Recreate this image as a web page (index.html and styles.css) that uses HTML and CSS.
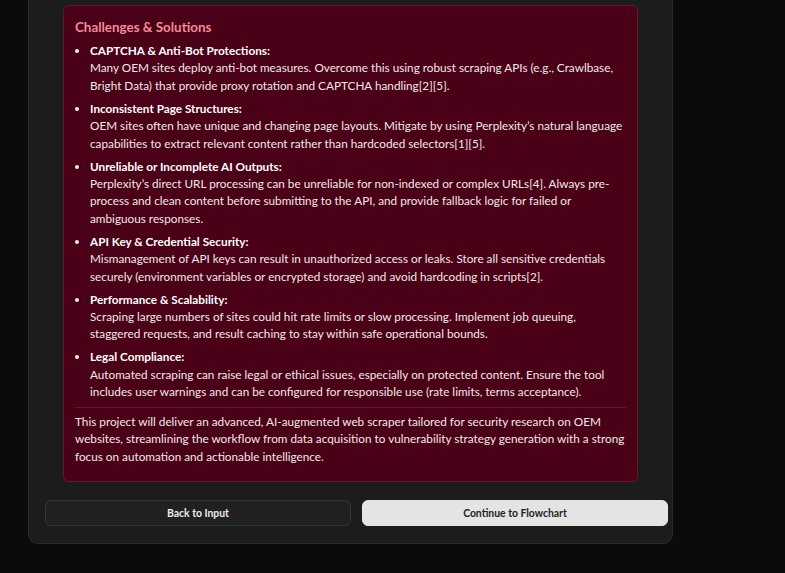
FILE: index.html
```html
<!DOCTYPE html>
<html lang="en">
<head>
<meta charset="utf-8">
<title>Challenges &amp; Solutions</title>
<link rel="stylesheet" href="styles.css">
</head>
<body>
<div class="page">
  <div class="card">
    <section class="challenges">
      <h3 class="challenges-title">Challenges &amp; Solutions</h3>
      <ul class="challenge-list">
        <li>
          <strong>CAPTCHA &amp; Anti-Bot Protections:</strong><br>
          Many OEM sites deploy anti-bot measures. Overcome this using robust scraping APIs (e.g., Crawlbase, Bright Data) that provide proxy rotation and CAPTCHA handling[2][5].
        </li>
        <li>
          <strong>Inconsistent Page Structures:</strong><br>
          OEM sites often have unique and changing page layouts. Mitigate by using Perplexity’s natural language capabilities to extract relevant content rather than hardcoded selectors[1][5].
        </li>
        <li>
          <strong>Unreliable or Incomplete AI Outputs:</strong><br>
          Perplexity’s direct URL processing can be unreliable for non-indexed or complex URLs[4]. Always pre-process and clean content before submitting to the API, and provide fallback logic for failed or ambiguous responses.
        </li>
        <li>
          <strong>API Key &amp; Credential Security:</strong><br>
          Mismanagement of API keys can result in unauthorized access or leaks. Store all sensitive credentials securely (environment variables or encrypted storage) and avoid hardcoding in scripts[2].
        </li>
        <li>
          <strong>Performance &amp; Scalability:</strong><br>
          Scraping large numbers of sites could hit rate limits or slow processing. Implement job queuing, staggered requests, and result caching to stay within safe operational bounds.
        </li>
        <li>
          <strong>Legal Compliance:</strong><br>
          Automated scraping can raise legal or ethical issues, especially on protected content. Ensure the tool includes user warnings and can be configured for responsible use (rate limits, terms acceptance).
        </li>
      </ul>
      <hr class="divider">
      <p class="summary">This project will deliver an advanced, AI-augmented web scraper tailored for security research on OEM websites, streamlining the workflow from data acquisition to vulnerability strategy generation with a strong focus on automation and actionable intelligence.</p>
    </section>
    <div class="actions">
      <button class="btn btn-secondary" type="button">Back to Input</button>
      <button class="btn btn-primary" type="button">Continue to Flowchart</button>
    </div>
  </div>
</div>
</body>
</html>
```

FILE: styles.css
```css
html, body {
  margin: 0;
  padding: 0;
}

body {
  background: #0b0b0b;
  font-family: Lato, "Open Sans", sans-serif;
  color: #f1e9eb;
  height: 573px;
  overflow: hidden;
}

.page {
  padding-left: 28px;
}

.card {
  width: 645px;
  box-sizing: border-box;
  margin-top: -30px;
  padding: 34px 0 17px 0;
  background: #1c1c1c;
  border: 1px solid #2a2a2a;
  border-radius: 10px;
}

.challenges {
  margin: 0 34px;
  padding: 11px 11px 16px 11px;
  background: #4a0016;
  border: 1px solid #66182d;
  border-radius: 6px;
}

.challenges-title {
  margin: 0 0 5px 0;
  font-size: 13.4px;
  line-height: 20px;
  font-weight: 700;
  color: #f38a9c;
}

.challenge-list {
  margin: 0;
  padding-left: 15px;
  font-size: 11.75px;
  line-height: 17.4px;
}

.challenge-list li {
  margin-bottom: 5.6px;
}

.challenge-list li:last-child {
  margin-bottom: 0;
}

.challenge-list strong {
  font-weight: 700;
  color: #ffffff;
}

.divider {
  margin: 6px 0 5px 0;
  border: 0;
  border-top: 1px solid #5e1a2c;
}

.summary {
  margin: 0;
  font-size: 11.75px;
  line-height: 17.4px;
}

.actions {
  display: flex;
  gap: 11px;
  margin: 18px 4px 0 16px;
}

.btn {
  flex: 1;
  height: 26px;
  border-radius: 6px;
  font-family: Lato, "Open Sans", sans-serif;
  font-size: 10.4px;
  font-weight: 700;
  cursor: pointer;
}

.btn-secondary {
  background: #212121;
  color: #ececec;
  border: 1px solid #363636;
}

.btn-primary {
  background: #e4e4e4;
  color: #222222;
  border: 1px solid #e4e4e4;
}
```
